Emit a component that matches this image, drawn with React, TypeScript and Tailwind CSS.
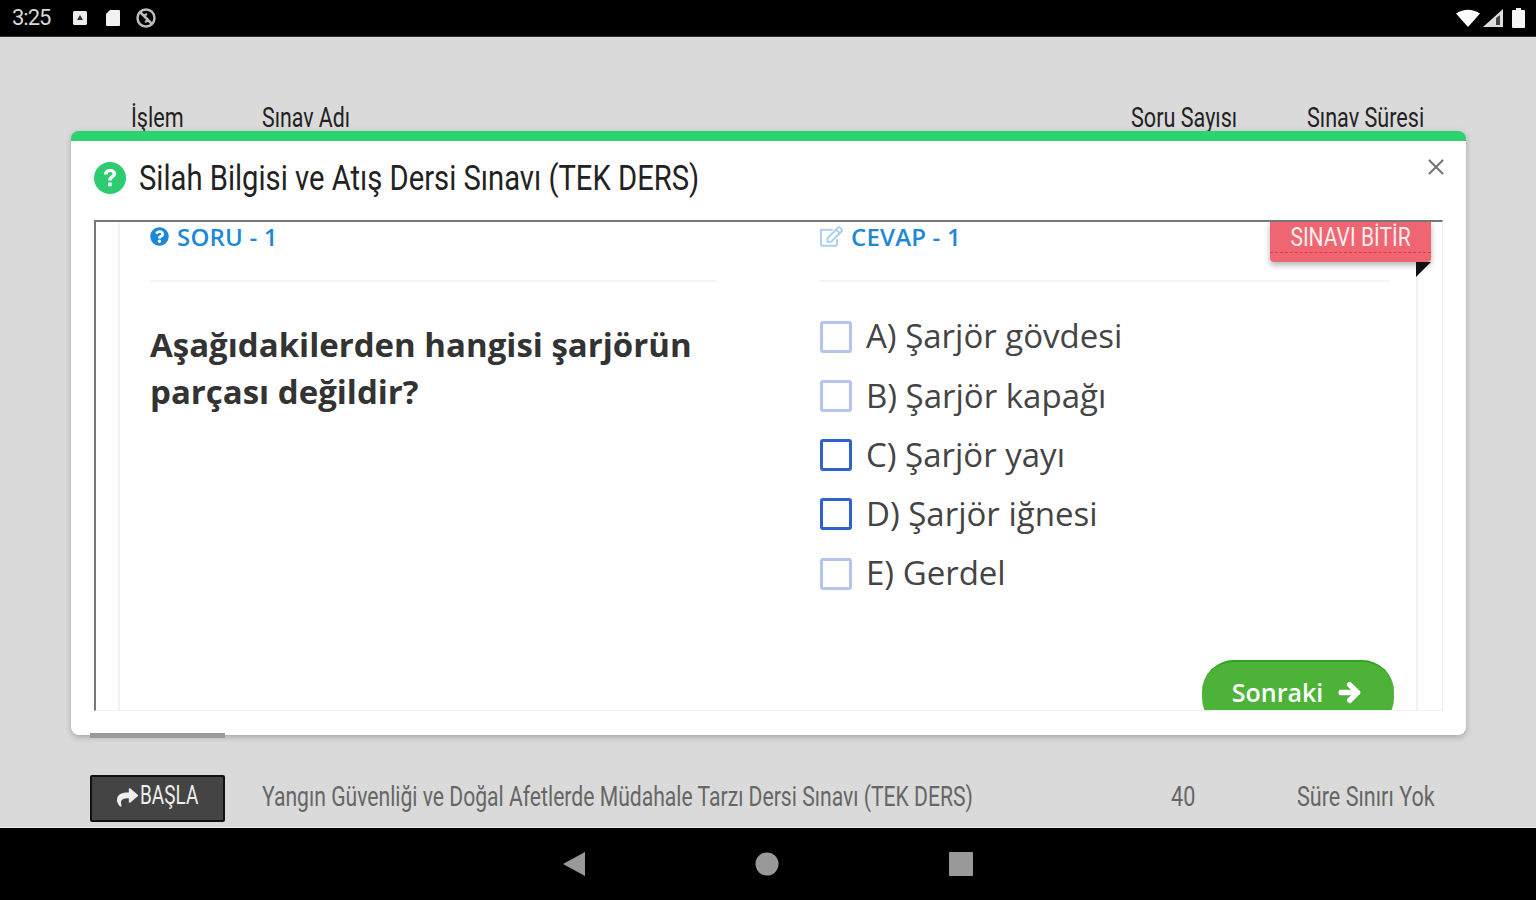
import React from "react";
import { X } from "lucide-react";
import { FaArrowRight, FaQuestionCircle, FaRegEdit, FaShare } from "react-icons/fa";

const options = [
  { t: "A) Şarjör gövdesi", c: "border-[#b4c4ec]" },
  { t: "B) Şarjör kapağı", c: "border-[#b4c4ec]" },
  { t: "C) Şarjör yayı", c: "border-[#2f62d0]" },
  { t: "D) Şarjör iğnesi", c: "border-[#2f62d0]" },
  { t: "E) Gerdel", c: "border-[#b4c4ec]" },
];

function Squeezed({ className, children }: { className: string; children: React.ReactNode }) {
  return <span className={"inline-block whitespace-nowrap origin-left " + className}>{children}</span>;
}

function StatusBar() {
  return (
    <div className="h-[37px] shrink-0 bg-black flex items-center justify-between pl-[12px] pr-[11px] border-b border-[#333]">
      <div className="flex items-center gap-[17px]">
        <span className="text-[22px] leading-none text-[#d8d8d8] font-['Roboto',sans-serif] w-[43px] tracking-[-1px]">3:25</span>
        <svg width="16" height="16" viewBox="0 0 16 16"><rect x="1" y="1" width="14" height="14" rx="1.5" fill="#eee" /><path d="M8 5l3 5H5z" fill="#333" /></svg>
        <svg width="16" height="18" viewBox="0 0 16 18"><path d="M5 1h9a1 1 0 0 1 1 1v14a1 1 0 0 1-1 1H2a1 1 0 0 1-1-1V5z" fill="#f2f2f2" /></svg>
        <svg width="22" height="22" viewBox="0 0 22 22" fill="none" stroke="#bdbdbd" strokeWidth="2.5" className="-ml-[3px]"><circle cx="11" cy="11" r="8.5" /><path d="M5 5l12 12M8 9l4-2M10 15l4-2" /></svg>
      </div>
      <div className="flex items-center gap-[3px]">
        <svg width="24" height="18" viewBox="0 0 24 18"><path d="M0 4.500Q12-3 24 4.500L12 18z" fill="#fff" /></svg>
        <svg width="20" height="18" viewBox="0 0 20 18" className="mr-[6px]"><path d="M0 18L20 0v18z" fill="#ddd" /><path d="M13 9v7h4V6z" fill="#444" /></svg>
        <svg width="13" height="20" viewBox="0 0 13 20"><path d="M4 0h5v2h3a1 1 0 0 1 1 1v16a1 1 0 0 1-1 1H1a1 1 0 0 1-1-1V3a1 1 0 0 1 1-1h3z" fill="#f5f5f5" /></svg>
      </div>
    </div>
  );
}

function NavBar() {
  return (
    <div className="h-[73px] shrink-0 bg-black border-t border-[#eee] flex items-center justify-center gap-[170px] pb-[1px]">
      <svg width="22" height="24" viewBox="0 0 22 24"><path d="M22 0v24L0 12z" fill="#999" /></svg>
      <svg width="24" height="24" viewBox="0 0 24 24"><circle cx="12" cy="12" r="11.5" fill="#999" /></svg>
      <svg width="24" height="24" viewBox="0 0 24 24"><rect width="24" height="24" rx="1" fill="#999" /></svg>
    </div>
  );
}

export default function App() {
  return (
    <div className="w-[1536px] h-[900px] overflow-hidden flex flex-col bg-[#dadada] font-['Roboto',sans-serif]">
      <StatusBar />
      <main className="relative flex-1 flex flex-col justify-between pl-[90px] pt-[64px] pb-[5px]">
        <div className="grid grid-cols-[135px_37px_848px_146px_218px] items-center text-[#222] text-[27px] leading-[34px] h-[34px]">
          <span className="pl-[41px]"><Squeezed className="scale-x-[0.8]">İşlem</Squeezed></span>
          <span />
          <span><Squeezed className="scale-x-[0.79]">Sınav Adı</Squeezed></span>
          <span className="pl-[21px]"><Squeezed className="scale-x-[0.8]">Soru Sayısı</Squeezed></span>
          <span className="pl-[51px]"><Squeezed className="scale-x-[0.8]">Sınav Süresi</Squeezed></span>
        </div>

        <div className="grid grid-cols-[135px_37px_848px_146px_218px] items-center text-[#666] text-[27px] h-[47px]">
          <span className="h-[47px] bg-[#444] border-2 border-[#111] rounded-[2px] flex items-center justify-center gap-[2px] text-[#eee] pl-[1px]">
            <FaShare size={21} color="#eee" className="mb-[2px]" />
            <span className="text-[25px] leading-[30px] w-[60px] mb-[6px] whitespace-nowrap origin-left scale-x-[0.76] inline-block">BAŞLA</span>
          </span>
          <span />
          <span className="pb-[3px]"><Squeezed className="scale-x-[0.783]">Yangın Güvenliği ve Doğal Afetlerde Müdahale Tarzı Dersi Sınavı (TEK DERS)</Squeezed></span>
          <span className="pl-[61px] pb-[3px]"><Squeezed className="scale-x-[0.8]">40</Squeezed></span>
          <span className="pl-[41px] pb-[3px]"><Squeezed className="scale-x-[0.8]">Süre Sınırı Yok</Squeezed></span>
        </div>

        <section className="absolute left-[71px] top-[94px] w-[1395px] h-[604px] bg-white border-t-[10px] border-[#2ad36f] rounded-[8px] shadow-[0_2px_6px_rgba(0,0,0,0.25)] flex flex-col pl-[23px] pr-[23px]">
          <header className="h-[79px] shrink-0 flex items-center relative pb-[4px]">
            <svg width="32" height="32" viewBox="0 0 32 32" className="mr-[13px] mb-[1px]">
              <circle cx="16" cy="16" r="16" fill="#2ecc71" />
              <path d="M10 12.500c0-3.400 2.600-5.500 6.200-5.500s6 2.100 6 4.800c0 3.900-4.500 3.900-4.500 6.700h-3.600c0-4.700 4.400-4.700 4.400-6.800 0-1-.9-1.700-2.300-1.700s-2.500.8-2.500 2.500z" fill="#fff" />
              <rect x="14.100" y="20.500" width="3.600" height="3.800" fill="#fff" />
            </svg>
            <span className="text-[35px] leading-none text-[#222] whitespace-nowrap origin-left scale-x-[0.834] inline-block">Silah Bilgisi ve Atış Dersi Sınavı (TEK DERS)</span>
            <X className="absolute right-[-6px] top-[13px] text-[#777]" size={26} strokeWidth={2} />
          </header>

          <div className="relative h-[491px] overflow-hidden border-t-[2px] border-l-[2px] border-[#777] border-r border-r-[#eee] border-b border-b-[#eee] font-['Open_Sans',sans-serif]">
            <div className="h-full w-[1300px] ml-[22px] border-l-2 border-r-2 border-[#f2f2f2] grid grid-cols-[700px_600px]">
              <div className="pl-[30px] pr-[104px]">
                <div className="h-[60px] border-b-2 border-[#f4f4f4] flex items-start gap-[8px] text-[#1e88d8] font-semibold text-[24px] leading-[30px] tracking-[0.2px]">
                  <FaQuestionCircle size={19} color="#1e88d8" className="mt-[5px] shrink-0" />
                  <span>SORU - 1</span>
                </div>
                <p className="mt-[39px] text-[33px] leading-[47px] font-bold text-[#333]">Aşağıdakilerden hangisi şarjörün parçası değildir?</p>
              </div>
              <div className="pr-[31px]">
                <div className="h-[60px] border-b-2 border-[#f4f4f4] flex items-start gap-[8px] text-[#1e88d8] font-semibold text-[24px] leading-[30px] tracking-[0.2px]">
                  <FaRegEdit size={23} color="#a9d0f0" className="mt-[3px] shrink-0" />
                  <span>CEVAP - 1</span>
                </div>
                <ul className="mt-[32px] flex flex-col gap-[15.250px]">
                  {options.map((o) => (
                    <li key={o.t} className="flex items-center h-[44px] gap-[14px] text-[33px] text-[#444] whitespace-nowrap">
                      <span className={"w-[32px] h-[32px] rounded-[3px] border-[3px] bg-white shrink-0 mt-[1px] " + o.c} />
                      <span>{o.t}</span>
                    </li>
                  ))}
                </ul>
              </div>
            </div>

            <div className="absolute left-[1174px] top-0 w-[161px] h-[40px] bg-[#ef6672] rounded-b-[4px] shadow-[0_3px_6px_rgba(0,0,0,0.3)] flex items-center justify-center pb-[8px] text-[#fdeeee] text-[25px] leading-[30px] font-['Roboto',sans-serif]">
              <span className="whitespace-nowrap scale-x-[0.84] inline-block">SINAVI BİTİR</span>
              <span className="absolute left-0 right-0 top-[30px] border-t border-dashed border-[#e0394a]" />
            </div>
            <svg width="15" height="15" viewBox="0 0 15 15" className="absolute left-[1320px] top-[40px]"><path d="M0 0h15L0 15z" fill="#111" /></svg>

            <button className="absolute left-[1106px] top-[438px] w-[192px] h-[70px] rounded-[32px] bg-[#4cb338] border-t-2 border-[#2ea51f] flex items-start justify-center pt-[12px] gap-[15px] text-white font-semibold text-[25px] leading-[36px] pr-[3px]">
              <span>Sonraki</span>
              <FaArrowRight size={23} className="mt-[7px]" stroke="currentColor" strokeWidth={40} />
            </button>
          </div>

          <div className="absolute left-[19px] bottom-[-3px] w-[135px] h-[5px] bg-[#999]" />
        </section>
      </main>
      <NavBar />
    </div>
  );
}
